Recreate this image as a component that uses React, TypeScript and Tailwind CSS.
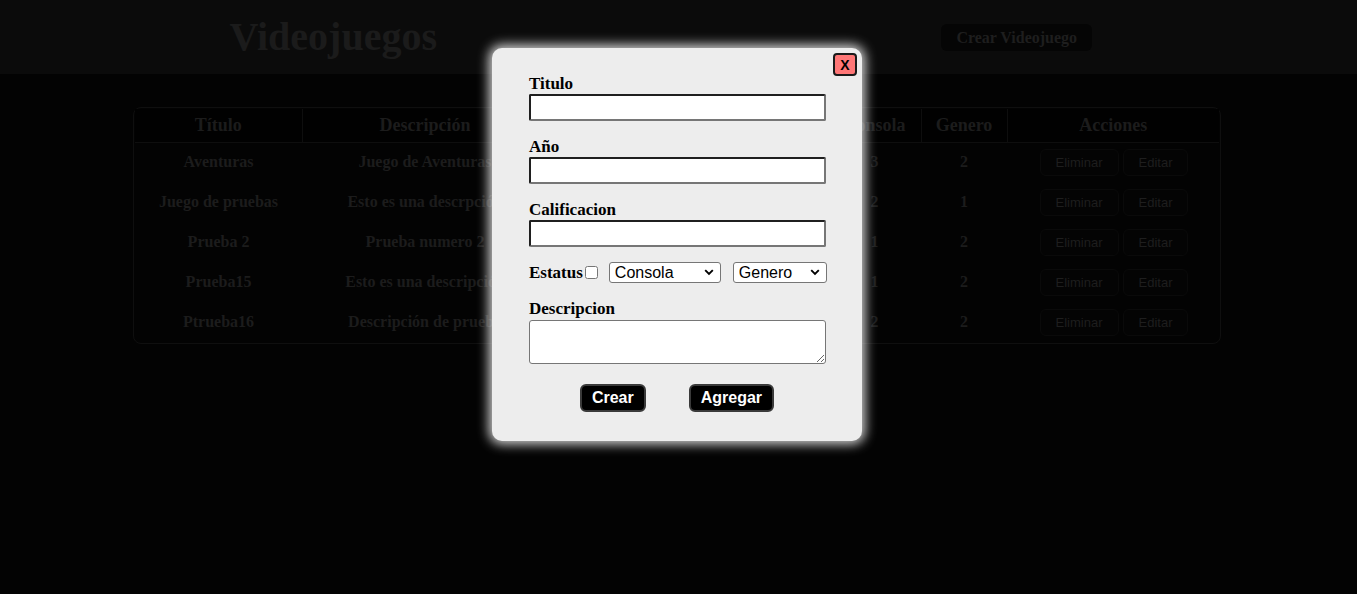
import React from "react";

const rows = [
  { t: "Aventuras", d: "Juego de Aventuras", a: "2020", c: "5", e: "1", con: "3", g: "2" },
  { t: "Juego de pruebas", d: "Esto es una descrpción", a: "2021", c: "4", e: "1", con: "2", g: "1" },
  { t: "Prueba 2", d: "Prueba numero 2", a: "2022", c: "3", e: "0", con: "1", g: "2" },
  { t: "Prueba15", d: "Esto es una descripción", a: "2022", c: "4", e: "1", con: "1", g: "2" },
  { t: "Ptrueba16", d: "Descripción de prueba", a: "2023", c: "5", e: "1", con: "2", g: "2" },
];

const serif = "font-['Liberation_Serif','Times_New_Roman',serif]";
const sans = "font-['Liberation_Sans',Arial,sans-serif]";

function Chevron() {
  return (
    <svg width="10" height="7" viewBox="0 0 10 7" className="pointer-events-none absolute right-[7px] top-[8px]">
      <path d="M1.2 1.2 L5 5 L8.8 1.2" fill="none" stroke="#000" strokeWidth="1.9" />
    </svg>
  );
}

export default function App() {
  return (
    <div className={`relative min-h-[594px] w-full bg-[#030303] ${serif}`}>
      {/* Header */}
      <header className="grid h-[74px] grid-cols-2 items-center bg-[#0b0b0b]">
        <div className="flex justify-center pr-[12px]">
          <h1 className="text-[40px] font-bold leading-[46px] text-[#1b1b1b]">Videojuegos</h1>
        </div>
        <div className="flex justify-center pr-[2px]">
          <button className="rounded-[6px] bg-[#050505] px-[15px] py-[4px] text-[16px] font-bold leading-[19px] text-[#1e1e1e]">
            Crear Videojuego
          </button>
        </div>
      </header>

      {/* Table */}
      <div className="mt-[33px] flex justify-center pr-[3px]">
        <div className="w-[1088px] rounded-[8px] border border-[#0f0f0f] p-[1px]">
          <table className="w-full table-fixed border-collapse text-center text-[#1c1c1c]">
            <colgroup>
              <col className="w-[167px]" />
              <col className="w-[246px]" />
              <col className="w-[80px]" />
              <col className="w-[120px]" />
              <col className="w-[80px]" />
              <col className="w-[93px]" />
              <col className="w-[86px]" />
              <col />
            </colgroup>
            <thead>
              <tr className="h-[33px] bg-[#010101] text-[18px] font-bold">
                {["Título", "Descripción", "Año", "Calificación", "Estatus", "Consola", "Genero", "Acciones"].map((h, i) => (
                  <th key={h} className={`border-b border-[#0e0e0e] font-bold ${i < 7 ? "border-r" : ""}`}>
                    {h}
                  </th>
                ))}
              </tr>
            </thead>
            <tbody className="text-[16px] font-bold">
              {rows.map((r) => (
                <tr key={r.t} className="h-[40px]">
                  <td>{r.t}</td>
                  <td className="whitespace-nowrap">{r.d}</td>
                  <td>{r.a}</td>
                  <td>{r.c}</td>
                  <td>{r.e}</td>
                  <td>{r.con}</td>
                  <td>{r.g}</td>
                  <td>
                    <div className={`flex justify-center gap-[4px] pl-[2px] ${sans} text-[13px] font-normal`}>
                      <button className="rounded-[6px] border border-[#0a0a0a] bg-[#040404] px-[15px] py-[4px] leading-[17px] text-[#1e1e1e]">
                        Eliminar
                      </button>
                      <button className="rounded-[6px] border border-[#0a0a0a] bg-[#040404] px-[15px] py-[4px] leading-[17px] text-[#1e1e1e]">
                        Editar
                      </button>
                    </div>
                  </td>
                </tr>
              ))}
            </tbody>
          </table>
        </div>
      </div>

      {/* Modal */}
      <div className="absolute inset-0 flex items-start justify-center pr-[3px] pt-[48px]">
        <div className="relative h-[393px] w-[370px] rounded-[10px] bg-[#ededed] px-[37px] pt-[26px] text-black shadow-[0_0_12px_3px_rgba(255,255,255,0.85)]">
          <button
            className={`absolute right-[5px] top-[5px] flex h-[23px] w-[24px] items-center justify-center rounded-[4px] border-2 border-[#1a1a1a] bg-[#ff7777] ${sans} text-[14px] font-bold leading-none text-black`}
          >
            X
          </button>

          {["Titulo", "Año", "Calificacion"].map((l) => (
            <div key={l} className="mb-[16px]">
              <label className="block text-[17px] font-bold leading-[20px]">{l}</label>
              <input
                type="text"
                className="block h-[27px] w-[297px] rounded-[2px] border-2 border-b-[#767676] border-l-[#1f1f1f] border-r-[#767676] border-t-[#1f1f1f] bg-white"
              />
            </div>
          ))}

          <div className="-mt-[1px] flex h-[21px] w-[297px] items-center justify-between">
            <div className="flex items-center">
              <span className="text-[17px] font-bold leading-[20px]">Estatus</span>
              <input type="checkbox" className="m-0 ml-[2px] h-[13px] w-[13px]" />
            </div>
            <div className="ml-[11px] flex gap-[12px]">
              <div className="relative">
                <select className={`h-[21px] w-[112px] appearance-none rounded-[3px] border border-[#767676] bg-white pl-[5px] ${sans} text-[16px] leading-[18px] text-black`}>
                  <option>Consola</option>
                </select>
                <Chevron />
              </div>
              <div className="relative">
                <select className={`h-[21px] w-[94px] appearance-none rounded-[3px] border border-[#767676] bg-white pl-[5px] ${sans} text-[16px] leading-[18px] text-black`}>
                  <option>Genero</option>
                </select>
                <Chevron />
              </div>
            </div>
          </div>

          <div className="mt-[16px]">
            <label className="block text-[17px] font-bold leading-[20px]">Descripcion</label>
            <textarea className="mt-[1px] block h-[44px] w-[297px] rounded-[3px] border border-[#767676] bg-white" />
          </div>

          <div className={`mt-[20px] flex justify-center gap-[43px] ${sans}`}>
            <button className="rounded-[6px] border-2 border-[#3a3a3a] bg-black px-[10px] py-[3px] text-[16px] font-bold leading-[18px] text-white">
              Crear
            </button>
            <button className="rounded-[6px] border-2 border-[#3a3a3a] bg-black px-[10px] py-[3px] text-[16px] font-bold leading-[18px] text-white">
              Agregar
            </button>
          </div>
        </div>
      </div>
    </div>
  );
}
